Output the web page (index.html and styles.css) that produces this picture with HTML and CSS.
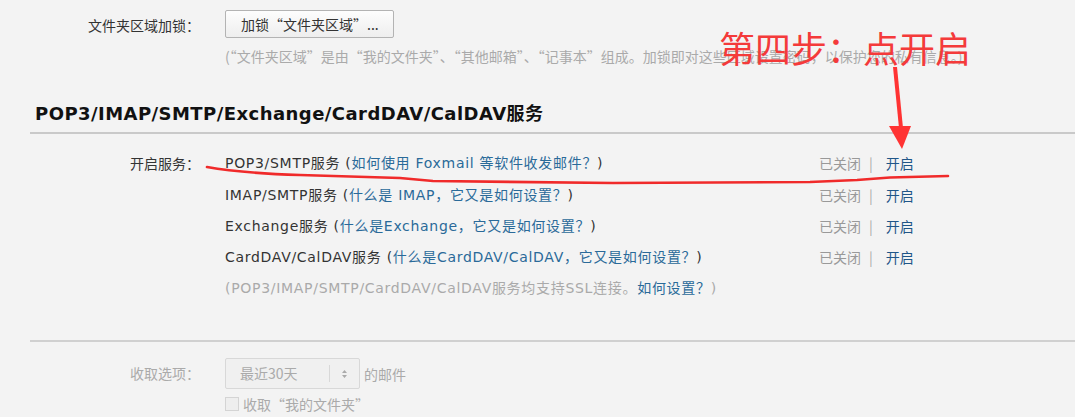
FILE: index.html
```html
<!DOCTYPE html>
<html lang="zh-CN">
<head>
<meta charset="utf-8">
<title>设置</title>
<link rel="stylesheet" href="styles.css">
</head>
<body>
<div class="page">
  <section class="lock">
    <div class="row">
      <div class="label">文件夹区域加锁<span class="colon">：</span></div>
      <div class="field">
        <button class="btn" type="button">加锁“文件夹区域”...</button>
        <p class="hint">(“文件夹区域”是由“我的文件夹”、“其他邮箱”、“记事本”组成。加锁即对这些区域设置密码，以保护您的私有信息。)</p>
      </div>
    </div>
  </section>

  <h2 class="sec-title">POP3/IMAP/SMTP/Exchange/CardDAV/CalDAV服务</h2>

  <section class="services">
    <div class="row">
      <div class="label">开启服务<span class="colon">：</span></div>
      <div class="svc-list">
        <div class="svc">
          <span class="name">POP3/SMTP服务 (<a class="link" href="#">如何使用 Foxmail 等软件收发邮件？</a>)</span>
          <span class="status">已关闭<span class="pipe">|</span><a class="on" href="#">开启</a></span>
        </div>
        <div class="svc">
          <span class="name">IMAP/SMTP服务 (<a class="link" href="#">什么是 IMAP，它又是如何设置？</a>)</span>
          <span class="status">已关闭<span class="pipe">|</span><a class="on" href="#">开启</a></span>
        </div>
        <div class="svc">
          <span class="name">Exchange服务 (<a class="link" href="#">什么是Exchange，它又是如何设置？</a>)</span>
          <span class="status">已关闭<span class="pipe">|</span><a class="on" href="#">开启</a></span>
        </div>
        <div class="svc">
          <span class="name">CardDAV/CalDAV服务 (<a class="link" href="#">什么是CardDAV/CalDAV，它又是如何设置？</a>)</span>
          <span class="status">已关闭<span class="pipe">|</span><a class="on" href="#">开启</a></span>
        </div>
        <div class="svc-note">(POP3/IMAP/SMTP/CardDAV/CalDAV服务均支持SSL连接。<a class="link" href="#">如何设置？</a>)</div>
      </div>
    </div>
  </section>

  <section class="fetch">
    <div class="row">
      <div class="label muted">收取选项<span class="colon">：</span></div>
      <div class="field">
        <div class="sel-line">
          <div class="select">
            <span class="sel-text">最近30天</span>
            <span class="sel-arrow">
              <svg width="7" height="10" viewBox="0 0 7 10"><path d="M3.5 1 L6 4 H1 Z M3.5 9 L6 6 H1 Z" fill="#aaa"/></svg>
            </span>
          </div>
          <span class="muted">的邮件</span>
        </div>
        <label class="check"><span class="box"></span>收取“我的文件夹”</label>
      </div>
    </div>
  </section>
</div>

<div class="annot">
  <svg class="annot-svg" width="1075" height="417" viewBox="0 0 1075 417">
    <path d="M207 167 Q 240 173 300 175 L 400 178 L 433 181 L 613 183 L 810 182 L 857 180 L 890 177.5 L 948 176" fill="none" stroke="#f02a2a" stroke-width="2.6" stroke-linecap="round" stroke-linejoin="round"/>
    <path d="M893 67 L 897 67 L 903 128 L 899 128 Z" fill="#f33"/>
    <path d="M889 126 L 911 126 L 902 149 Z" fill="#f33"/>
  </svg>
  <div class="annot-text">第四步<span class="colon">：</span>点开启</div>
</div>
</body>
</html>
```

FILE: styles.css
```css
html, body {
  margin: 0;
  padding: 0;
  background: #f3f3f3;
}

.page {
  font-family: "DejaVu Sans", "Noto Sans CJK SC", sans-serif;
  font-size: 14px;
  color: #333;
  padding: 10px 0 0 30px;
}

.row {
  display: grid;
  grid-template-columns: 170px 1fr;
  column-gap: 25px;
}

.label {
  text-align: right;
  line-height: 30px;
  font-family: "Noto Sans CJK SC", sans-serif;
}

.colon {
  font-family: "Noto Sans CJK TC", sans-serif;
}

.muted {
  color: #aaa;
}

.btn {
  height: 28px;
  padding: 0 14px 0 15px;
  font: 14px "Noto Sans CJK SC", sans-serif;
  color: #333;
  background: linear-gradient(#fdfdfd, #eeeeee);
  border: 1px solid #b3b3b3;
  border-radius: 2px;
  margin: 0;
}

.hint {
  margin: 8px 0 0;
  color: #aaa;
  line-height: 20px;
  font-family: "Noto Sans CJK SC", sans-serif;
  white-space: nowrap;
}

.sec-title {
  margin: 36px 0 0;
  padding: 0 0 6px 5px;
  font-size: 18px;
  font-weight: bold;
  color: #111;
  line-height: 24px;
  letter-spacing: 0.45px;
  border-bottom: 2px solid #c9c9c9;
}

.services {
  padding-top: 13px;
  height: 206px;
  box-sizing: border-box;
}

.services .label {
  line-height: 33px;
}

.svc {
  display: grid;
  grid-template-columns: 594px auto;
  line-height: 31px;
}

.svc:first-child {
  line-height: 33px;
}

.name {
  letter-spacing: 0.7px;
  white-space: nowrap;
}

.status {
  color: #999;
  font-family: "Noto Sans CJK SC", sans-serif;
  white-space: nowrap;
}

.pipe {
  margin: 0 13px 0 8px;
  color: #aaa;
}

.link {
  color: #2a6a99;
  text-decoration: none;
}

.on {
  color: #1f5688;
  text-decoration: none;
}

.svc-note {
  color: #aaa;
  line-height: 31px;
  letter-spacing: 0.7px;
  white-space: nowrap;
}

.fetch {
  border-top: 2px solid #d0d0d0;
  padding-top: 16px;
}

.fetch .label {
  line-height: 31px;
}

.sel-line {
  display: flex;
  align-items: center;
  gap: 4px;
  font-family: "Noto Sans CJK SC", sans-serif;
}

.select {
  display: flex;
  align-items: center;
  width: 135px;
  height: 31px;
  box-sizing: border-box;
  border: 1px solid #d8d8d8;
  border-radius: 2px;
  background: #f0f0f0;
  color: #aaa;
}

.sel-text {
  flex: 1;
  padding-left: 14px;
  border-right: 1px solid #d8d8d8;
  line-height: 17px;
}

.sel-arrow {
  width: 29px;
  display: flex;
  justify-content: center;
}

.check {
  display: flex;
  align-items: center;
  gap: 4px;
  margin-top: 5px;
  color: #aaa;
  font-family: "Noto Sans CJK SC", sans-serif;
  line-height: 20px;
}

.box {
  width: 12px;
  height: 12px;
  border: 1px solid #d4d4d4;
  background: #eee;
}

.annot {
  position: absolute;
  left: 0;
  top: 0;
  width: 1075px;
  height: 417px;
  pointer-events: none;
}

.annot-svg {
  position: absolute;
  left: 0;
  top: 0;
}

.annot-text {
  position: absolute;
  left: 719px;
  top: 29px;
  font: 36px/36px "Noto Sans CJK SC", sans-serif;
  color: #f43a3a;
  white-space: nowrap;
}
```
